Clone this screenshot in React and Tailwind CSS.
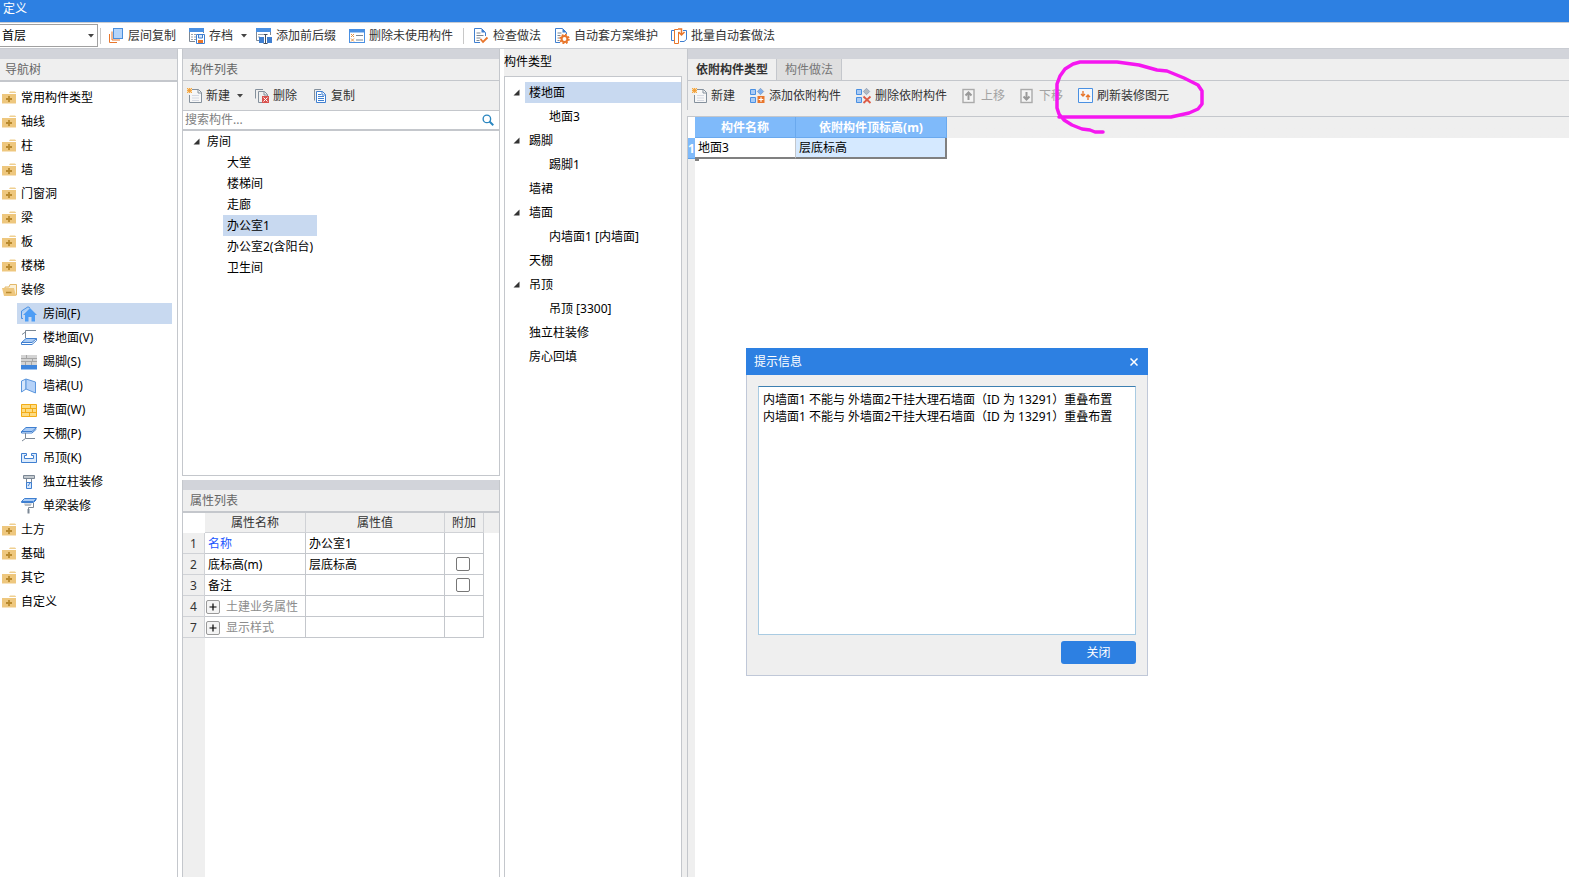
// App.jsx
// Ventana "定义": árbol de navegación, lista de componentes, propiedades y
// tipos dependientes, con el aviso de superposición encima.

import React, { useState } from 'react';

// ─── Iconos ───
const Svg = ({ children, size = 'w-4 h-4' }) => (
  <svg viewBox="0 0 16 16" className={`${size} shrink-0`} fill="none" aria-hidden="true">
    {children}
  </svg>
);

const CaretIcon = () => (
  <svg viewBox="0 0 6 4" className="w-[6px] h-1 ml-1 -mr-1 shrink-0" aria-hidden="true">
    <path d="M0 0h6L3 3.5z" fill="#444" />
  </svg>
);

const ExpandedIcon = () => (
  <svg viewBox="0 0 7 7" className="w-[7px] h-[7px] shrink-0" aria-hidden="true">
    <path d="M6.5 0.5v6h-6z" fill="#333" />
  </svg>
);

const CopyFloorIcon = () => (
  <Svg>
    <path d="M1.5 6v8.5H9" stroke="#e8762c" />
    <path d="M4 3.5v8.5h8" stroke="#e8762c" />
    <rect x="5.5" y=".5" width="9" height="10" fill="#b5d5fb" stroke="#4a8fdc" />
  </Svg>
);

const ArchiveIcon = () => (
  <Svg>
    <path d="M6 13.500H.5V.5h14V5" stroke="#7b8794" />
    <path d="M0 0h15v4H0z" fill="#4a90e2" />
    <path d="M2 6.500h2m1 0h2M2 9h2m1 0h2M2 11.500h2m1 0h2" stroke="#9aa3ad" />
    <path d="M7.500 6.500h8v9h-8z" fill="#fff" stroke="#3f7fd0" />
    <path d="M9.500 7v3h4V7" stroke="#3f7fd0" fill="#dbe9fa" />
    <path d="M9 12h5v3H9z" fill="#e8762c" />
  </Svg>
);

const AffixIcon = () => (
  <Svg>
    <path d="M3 12.500H.5V.5h14V7" stroke="#7b8794" />
    <path d="M0 0h15v4H0z" fill="#4a90e2" />
    <path d="M2 6.500h5M2 9h2" stroke="#9aa3ad" />
    <path d="M3 9h5v6H3zM11 9h5v6h-5z" fill="#3f7fd0" />
    <path d="M7.500 6.500h4M9.500 6.500v9M7.500 15.500h4" stroke="#444f5c" />
  </Svg>
);

const UnusedIcon = () => (
  <Svg>
    <rect x=".5" y="1.500" width="15" height="13" fill="#fff" stroke="#4a90e2" />
    <path d="M0 1h16v3.500H0z" fill="#4a90e2" />
    <path d="M2 6l3 3m0-3L2 9M2 10.500l3 3m0-3l-3 3" stroke="#e8903c" />
    <path d="M7 7.500h7M7 12h7" stroke="#7b8794" />
  </Svg>
);

const CheckDocIcon = () => (
  <Svg>
    <path d="M7 14.500H1.500V.5h7l4 4V8" stroke="#3f7fd0" />
    <path d="M8.500.5v4h4z" fill="#3f7fd0" />
    <path d="M3.500 5h4m-4 2.500h7m-7 2.500h4m-4 2.500h3" stroke="#7b8794" />
    <path d="M7.500 11l2.500 3 4.500-4.500" stroke="#e8762c" strokeWidth="1.800" />
  </Svg>
);

const GearDocIcon = () => (
  <Svg>
    <path d="M6 14.500H1.500V.5h7l4 4V6" stroke="#3f7fd0" />
    <path d="M8.500.5v4h4z" fill="#3f7fd0" />
    <path d="M3.500 5h4m-4 2.500h3m-3 2.500h2m-2 2.500h2" stroke="#7b8794" />
    <circle cx="10.500" cy="11" r="4.400" stroke="#e8762c" strokeWidth="1.600" strokeDasharray="1.800 1.650" />
    <circle cx="10.500" cy="11" r="2.900" stroke="#e8762c" strokeWidth="2" />
  </Svg>
);

const BatchIcon = () => (
  <Svg>
    <path d="M3 2.500H.5v10H3M12 2.500h3.500v9L13 13.500H9" stroke="#3f7fd0" />
    <path d="M7 1.500H3.500v14H7.500V4" stroke="#e8762c" fill="#fff" />
    <path d="M7 1h3.500V6M7.500 4l3 3 3-3" stroke="#e8762c" strokeWidth="1.500" />
  </Svg>
);

const NewIcon = () => (
  <Svg>
    <path d="M5 1.500h6.500l3 3v10h-12V7" stroke="#84909c" fill="#f7f7f7" />
    <path d="M11 1.500v3.500h3.500" stroke="#84909c" />
    <path d="M5 7.500h7m-7 2.500h7m-7 2.500h7" stroke="#d5d9e2" />
    <path d="M0 0h5v5H0z" fill="#fbdca8" />
    <path d="M0 0l5 5M5 0L0 5M2.500 0v5M0 2.500h5" stroke="#f0982e" strokeWidth=".8" />
  </Svg>
);

const DeleteIcon = () => (
  <Svg>
    <path d="M1.500 10.500v-9H9" stroke="#84909c" />
    <path d="M8 14.500H4.500v-11h6l3 3V9" stroke="#84909c" />
    <path d="M10 3.500V7h3.500" stroke="#84909c" />
    <path d="M8 8h7v7H8z" fill="#d9534f" />
    <path d="M9.500 9.500l4 4m0-4l-4 4" stroke="#fff" />
  </Svg>
);

const CopyIcon = () => (
  <Svg>
    <path d="M2.500 12.500V1.500H9" stroke="#84909c" />
    <path d="M4.500 3.500h6l3 3v8h-9z" fill="#fff" stroke="#3f7fd0" />
    <path d="M10 3.500V7h3.500" stroke="#3f7fd0" />
    <path d="M6 6.500h3M6 8.500h6m-6 2h6m-6 2h6" stroke="#3f7fd0" />
  </Svg>
);

const TilesIcon = ({ children, diamond = '#7fb0ee' }) => (
  <Svg>
    <path d="M.5 1.500h5v5h-5zM.5 9.500h5v5h-5z" fill="#a9cbf5" stroke="#4a90e2" />
    <path d="M10.500.3l3.200 3.200-3.200 3.200-3.200-3.200z" fill={diamond} stroke="#7591b3" strokeWidth=".6" />
    {children}
  </Svg>
);

const AddAttachIcon = () => (
  <TilesIcon>
    <path d="M7.500 8h7v7h-7z" fill="#e8762c" />
    <path d="M11 9.200v4.600M8.700 11.500h4.600" stroke="#fff" strokeWidth="1.200" />
  </TilesIcon>
);

const RemoveAttachIcon = () => (
  <TilesIcon diamond="#b4bac1">
    <path d="M7.500 8.500l7 6.500m0-6.500l-7 6.500" stroke="#dd5a45" strokeWidth="1.800" />
  </TilesIcon>
);

const MoveUpIcon = () => (
  <Svg>
    <rect x="1" y="1.500" width="11" height="13" fill="#f4f4f4" stroke="#aaa" strokeWidth="1.400" />
    <path d="M6.500 12V5M3.500 7.500l3-3 3 3" stroke="#999" strokeWidth="2" />
  </Svg>
);

const MoveDownIcon = () => (
  <Svg>
    <rect x="1" y="1.500" width="11" height="13" fill="#f4f4f4" stroke="#aaa" strokeWidth="1.400" />
    <path d="M6.500 4v7M3.500 8.500l3 3 3-3" stroke="#999" strokeWidth="2" />
  </Svg>
);

const RefreshIcon = () => (
  <Svg>
    <path d="M.5 .5h14v14H.5z" fill="#f4f8fd" stroke="#4a90e2" />
    <path d="M5 3v5M3 6l2 2 2-2M10 12V7M8 9l2-2 2 2" stroke="#e8762c" strokeWidth="1.300" />
  </Svg>
);

const SearchIcon = () => (
  <Svg size="w-3 h-3">
    <circle cx="6.500" cy="6.500" r="5" stroke="#2a86c0" strokeWidth="1.800" />
    <path d="M10 10l5 5" stroke="#2a86c0" strokeWidth="2.600" />
  </Svg>
);

const FolderIcon = () => (
  <Svg>
    <path d="M8 1.500h5l1 1V3H7z" fill="#efcf90" />
    <path d="M0 4h14v9.500H0z" fill="#eec77e" />
    <path d="M7 6v6M4 9h6" stroke="#b98a2f" strokeWidth="1.800" />
  </Svg>
);

const FolderOpenIcon = () => (
  <Svg>
    <path d="M8 2.500h6.500V13H3V5h4z" fill="#fbf0d6" stroke="#e3b869" />
    <path d="M0 6h12l2 8H2z" fill="#eec77e" />
    <path d="M4 10.500h5.500" stroke="#b98a2f" strokeWidth="1.500" />
  </Svg>
);

const RoomIcon = () => (
  <Svg>
    <path d="M.5 8V5L7 .8l2 1.200M.5 8v4.500H2" stroke="#4a90e2" fill="#a9cff9" />
    <path d="M9 2l7 7h-2v6.500h-3.500V11h-3v4.500H4V9H2z" fill="#4d9df5" />
  </Svg>
);

const FloorIcon = () => (
  <Svg>
    <path d="M15 .5H4.500V8M4.500 2L1 4.500" stroke="#7b8794" />
    <path d="M5 8.500h10.500l-4.500 4H.5z" fill="#a9cbf5" stroke="#3f7fd0" />
    <path d="M.5 12.500v2H11l4.500-4v-2" stroke="#3f7fd0" />
  </Svg>
);

const SkirtingIcon = () => (
  <Svg>
    <path d="M0 1h16v10H0z" fill="#d4d4d4" />
    <path d="M0 4.500h16M0 7.500h16M5.500 1v3.500M11.500 4.500v3M4.500 7.500V11M10.500 7.500V11" stroke="#a5a5a5" />
    <path d="M0 11h16v4.500H0z" fill="#3f86dd" />
  </Svg>
);

const DadoIcon = () => (
  <Svg>
    <path d="M.5 3L5 1v10L.5 14z" fill="#d7e7fb" stroke="#5b96dd" />
    <path d="M5 1l9.500 3v11L5 11z" fill="#b5d2f8" stroke="#5b96dd" />
  </Svg>
);

const WallIcon = () => (
  <Svg>
    <path d="M.5 2.500h15v12H.5z" fill="#fddc83" stroke="#f3ac17" />
    <path d="M0 6.500h16M0 10.500h16M9.500 2v4M4.500 6.500v4M11.500 6.500v4M8.500 10.500v4" stroke="#f3ac17" />
  </Svg>
);

const CanopyIcon = () => (
  <Svg>
    <path d="M5 1.500h10.500l-4.500 4H.5z" fill="#a9cbf5" stroke="#3f7fd0" />
    <path d="M.5 5.500v1.500H11l4.500-4" stroke="#3f7fd0" />
    <path d="M4.500 7v5.500L1 15m3.500-2.500H14" stroke="#7b8794" />
  </Svg>
);

const CeilingIcon = () => (
  <Svg>
    <path d="M.5 3.500h5v2h-2v3h9v-3h-2v-2h5v9H.5z" fill="#dcebfc" stroke="#3f7fd0" />
  </Svg>
);

const ColumnIcon = () => (
  <Svg>
    <path d="M2.500 1.500h11v3h-11z" fill="#c4cacf" stroke="#7b8794" />
    <path d="M5.500 5v4M10.500 5v4" stroke="#7b8794" />
    <path d="M5.500 8.500v6h5v-6z" fill="#d7e7fb" stroke="#3f7fd0" />
    <path d="M7 12l2-3" stroke="#3f7fd0" />
  </Svg>
);

const BeamIcon = () => (
  <Svg>
    <path d="M3.500.5h12l-3 3H.5z" fill="#a9cbf5" stroke="#3f7fd0" />
    <path d="M.5 3.500v1h12l3-3" stroke="#3f7fd0" />
    <path d="M3 5.500h8l-1.500 2.500H4z" fill="#b9bfc6" />
    <path d="M12.500 5v4.500H7.500V11" stroke="#7b8794" />
    <path d="M7.500 11v4.500" stroke="#7b8794" strokeWidth="2" />
  </Svg>
);

// ─── Datos ───
const NAV_TREE = [
  { label: '常用构件类型' },
  { label: '轴线' },
  { label: '柱' },
  { label: '墙' },
  { label: '门窗洞' },
  { label: '梁' },
  { label: '板' },
  { label: '楼梯' },
  {
    label: '装修',
    children: [
      { label: '房间(F)', Icon: RoomIcon },
      { label: '楼地面(V)', Icon: FloorIcon },
      { label: '踢脚(S)', Icon: SkirtingIcon },
      { label: '墙裙(U)', Icon: DadoIcon },
      { label: '墙面(W)', Icon: WallIcon },
      { label: '天棚(P)', Icon: CanopyIcon },
      { label: '吊顶(K)', Icon: CeilingIcon },
      { label: '独立柱装修', Icon: ColumnIcon },
      { label: '单梁装修', Icon: BeamIcon },
    ],
  },
  { label: '土方' },
  { label: '基础' },
  { label: '其它' },
  { label: '自定义' },
];

const ROOMS = ['大堂', '楼梯间', '走廊', '办公室1', '办公室2(含阳台)', '卫生间'];

const TYPE_TREE = [
  { label: '楼地面', children: ['地面3'] },
  { label: '踢脚', children: ['踢脚1'] },
  { label: '墙裙' },
  { label: '墙面', children: ['内墙面1 [内墙面]'] },
  { label: '天棚' },
  { label: '吊顶', children: ['吊顶 [3300]'] },
  { label: '独立柱装修' },
  { label: '房心回填' },
];

const PROPERTIES = [
  { no: 1, name: '名称', value: '办公室1', link: true },
  { no: 2, name: '底标高(m)', value: '层底标高', check: true },
  { no: 3, name: '备注', value: '', check: true },
  { no: 4, name: '土建业务属性', value: '', group: true },
  { no: 7, name: '显示样式', value: '', group: true },
];

const MESSAGE = [
  '内墙面1 不能与 外墙面2干挂大理石墙面（ID 为 13291）重叠布置',
  '内墙面1 不能与 外墙面2干挂大理石墙面（ID 为 13291）重叠布置',
].join('\n');

// ─── Piezas comunes ───
const ToolButton = ({ icon, children, caret, disabled }) => (
  <button
    type="button"
    disabled={disabled}
    className="flex items-center gap-[3px] whitespace-nowrap text-[#333] disabled:text-[#a3a3a3]"
  >
    {icon}
    {children}
    {caret && <CaretIcon />}
  </button>
);

const MenuButton = ({ icon, children, caret }) => (
  <button type="button" className="flex items-center gap-1 px-1.5 h-5 whitespace-nowrap text-[#333]">
    {icon}
    {children}
    {caret && <CaretIcon />}
  </button>
);

const Divider = () => <span className="w-px h-4 bg-[#c8c8c8]" />;

const Grip = () => <div className="h-[10px] bg-[#d2d4da]" />;

// ─── Barra superior ───
const MenuBar = () => (
  <div className="flex items-center h-[27px] bg-white border-y border-[#c9ccd2]">
    <div className="relative w-[98px] h-[23px] shrink-0">
      <select
        aria-label="楼层"
        className="appearance-none w-full h-full pl-[2px] bg-white border border-l-0 border-[#a0a0a0] text-black"
      >
        <option>首层</option>
      </select>
      <svg viewBox="0 0 6 4" className="absolute right-1 top-[10px] w-[6px] h-1 pointer-events-none" aria-hidden="true">
        <path d="M0 0h6L3 3.500z" fill="#444" />
      </svg>
    </div>
    <div className="flex items-center gap-px pl-[2px]">
      <Divider />
      <MenuButton icon={<CopyFloorIcon />}>层间复制</MenuButton>
      <MenuButton icon={<ArchiveIcon />} caret>存档</MenuButton>
      <MenuButton icon={<AffixIcon />}>添加前后缀</MenuButton>
      <MenuButton icon={<UnusedIcon />}>删除未使用构件</MenuButton>
    </div>
    <div className="flex items-center gap-px pl-1">
      <Divider />
      <span className="w-px" />
      <MenuButton icon={<CheckDocIcon />}>检查做法</MenuButton>
      <MenuButton icon={<GearDocIcon />}>自动套方案维护</MenuButton>
      <MenuButton icon={<BatchIcon />}>批量自动套做法</MenuButton>
    </div>
  </div>
);

// ─── Árbol de navegación ───
const NavTree = () => {
  const [selected, setSelected] = useState('房间(F)');

  return (
    <nav className="w-[178px] shrink-0 bg-white border-r border-[#c4c7cc]">
      <Grip />
      <h2 className="h-[23px] pl-[5px] leading-[21px] bg-[#efefef] border-b-2 border-[#c4c7cc] text-[#666]">导航树</h2>
      <ul className="pt-1">
        {NAV_TREE.map(({ label, children }) => (
          <li key={label}>
            <button type="button" className="flex items-center gap-[3px] h-6 pl-[2px]">
              {children ? <FolderOpenIcon /> : <FolderIcon />}
              {label}
            </button>
            {children && (
              <ul className="pl-[17px] pr-[5px]">
                {children.map(({ label: child, Icon }) => (
                  <li key={child} className="h-6 pt-px">
                    <button
                      type="button"
                      onClick={() => setSelected(child)}
                      className={`flex items-center gap-[6px] w-full h-[21px] pl-1 ${selected === child ? 'bg-[#c8d9f0]' : ''}`}
                    >
                      <Icon />
                      {child}
                    </button>
                  </li>
                ))}
              </ul>
            )}
          </li>
        ))}
      </ul>
    </nav>
  );
};

// ─── Lista de componentes ───
const ComponentList = () => {
  const [room, setRoom] = useState('办公室1');

  return (
    <section className="border border-t-0 border-[#c4c7cc] bg-white">
      <Grip />
      <h2 className="h-[22px] pl-[7px] leading-[21px] bg-[#efefef] border-b border-[#c4c7cc] text-[#666]">构件列表</h2>
      <div className="flex items-center gap-[15px] h-[30px] pl-1 bg-[#efefef] border-b border-[#c4c7cc]">
        <ToolButton icon={<NewIcon />} caret>新建</ToolButton>
        <ToolButton icon={<DeleteIcon />}>删除</ToolButton>
        <ToolButton icon={<CopyIcon />}>复制</ToolButton>
      </div>
      <div className="flex items-center h-5 pr-[5px] border-b-2 border-[#c4c7cc]">
        <input
          type="text"
          aria-label="搜索构件"
          placeholder="搜索构件..."
          className="flex-1 h-[18px] pl-[2px] outline-none placeholder:text-[#808080]"
        />
        <button type="button" aria-label="搜索">
          <SearchIcon />
        </button>
      </div>
      <div className="h-[344px] overflow-hidden">
        <div className="flex items-center gap-[7px] h-[21px] pl-[10px]">
          <ExpandedIcon />
          房间
        </div>
        <ul className="flex flex-col items-start pl-10">
          {ROOMS.map((name) => (
            <li key={name}>
              <button
                type="button"
                onClick={() => setRoom(name)}
                className={`h-[21px] min-w-[94px] pl-1 text-left ${room === name ? 'bg-[#c8d9f0]' : ''}`}
              >
                {name}
              </button>
            </li>
          ))}
        </ul>
      </div>
    </section>
  );
};

// ─── Propiedades ───
const PropertyList = () => (
  <section className="flex flex-col flex-1 mt-1 border-x border-[#c4c7cc] bg-white">
    <Grip />
    <h2 className="h-[23px] pl-[7px] leading-[21px] bg-[#efefef] border-b-2 border-[#c4c7cc] text-[#666]">属性列表</h2>
    <table className="w-full table-fixed border-separate border-spacing-0">
      <colgroup>
        <col className="w-[22px]" />
        <col className="w-[101px]" />
        <col className="w-[139px]" />
        <col className="w-[39px]" />
        <col />
      </colgroup>
      <thead>
        <tr className="h-5 bg-[#efefef] text-[#333]">
          <th className="p-0 bg-white" />
          <th className="p-0 pt-px font-normal border-r border-b border-[#d0d2d6]">属性名称</th>
          <th className="p-0 pt-px font-normal border-r border-b border-[#d0d2d6]">属性值</th>
          <th className="p-0 pt-px font-normal border-r border-b border-[#d0d2d6]">附加</th>
          <th className="p-0" />
        </tr>
      </thead>
      <tbody>
        {PROPERTIES.map(({ no, name, value, link, check, group }) => (
          <tr key={no} className="h-[21px]">
            <td className="p-0 pt-[2px] text-center bg-[#efefef] border-r border-b border-[#d0d2d6] text-[#333]">{no}</td>
            <td className="p-0 pt-[2px] border-r border-b border-[#c4c7cc]">
              {group ? (
                <span className="flex items-center gap-[6px] pl-px text-[#8c8c8c]">
                  <button
                    type="button"
                    aria-label={`展开${name}`}
                    className="flex items-center justify-center w-[14px] h-[14px] border border-[#999] rounded-[2px] bg-[#f4f4f4]"
                  >
                    <svg viewBox="0 0 8 8" className="w-2 h-2" aria-hidden="true">
                      <path d="M4 .5v7M.5 4h7" stroke="#000" strokeWidth="1.200" />
                    </svg>
                  </button>
                  {name}
                </span>
              ) : (
                <span className={`block pl-[3px] ${link ? 'text-[#1a56ff]' : ''}`}>{name}</span>
              )}
            </td>
            <td className="p-0 pt-[2px] pl-[3px] border-r border-b border-[#c4c7cc]">{value}</td>
            <td className="p-0 pl-[11px] border-r border-b border-[#c4c7cc]">
              {check && (
                <input
                  type="checkbox"
                  aria-label={`${name} 附加`}
                  className="block appearance-none w-[14px] h-[14px] border border-[#777] rounded-[2px] bg-white"
                />
              )}
            </td>
            <td className="p-0" />
          </tr>
        ))}
      </tbody>
    </table>
    <div className="flex-1 w-[22px] bg-[#efefef]" />
  </section>
);

// ─── Tipos de componente ───
const TypeTree = () => (
  <section className="flex flex-col w-[183px] ml-1 pr-[5px] shrink-0 bg-[#efefef]">
    <h2 className="h-[27px] leading-[25px]">构件类型</h2>
    <ul className="flex-1 pt-1 bg-white border border-b-0 border-[#c4c7cc]">
      {TYPE_TREE.map(({ label, children }, i) => (
        <li key={label}>
          <div className="h-6 pt-px pl-2">
            <div className="flex items-center h-[21px]">
              <span className="w-3">{children && <ExpandedIcon />}</span>
              <span className={`flex-1 pl-1 leading-[21px] ${i === 0 ? 'bg-[#c8d9f0]' : ''}`}>{label}</span>
            </div>
          </div>
          {children && (
            <ul>
              {children.map((child) => (
                <li key={child} className="h-6 pl-11 leading-6">{child}</li>
              ))}
            </ul>
          )}
        </li>
      ))}
    </ul>
  </section>
);

// ─── Tipos dependientes ───
const AttachedPanel = () => (
  <section className="flex flex-col flex-1 min-w-0 bg-[#efefef]">
    <div className="border-l border-[#c4c7cc]">
      <Grip />
      <div className="flex h-[22px] border-b border-[#c4c7cc]" role="tablist">
        <button type="button" role="tab" aria-selected="true" className="px-2 border-r border-[#c4c7cc] font-bold text-[#333]">
          依附构件类型
        </button>
        <button type="button" role="tab" aria-selected="false" className="px-2 bg-[#dfdfdf] border-r border-[#c4c7cc] text-[#777]">
          构件做法
        </button>
      </div>
      <div className="flex items-center gap-[15px] h-[29px] pl-1">
        <ToolButton icon={<NewIcon />}>新建</ToolButton>
        <ToolButton icon={<AddAttachIcon />}>添加依附构件</ToolButton>
        <ToolButton icon={<RemoveAttachIcon />}>删除依附构件</ToolButton>
        <ToolButton icon={<MoveUpIcon />} disabled>上移</ToolButton>
        <ToolButton icon={<MoveDownIcon />} disabled>下移</ToolButton>
        <ToolButton icon={<RefreshIcon />}>刷新装修图元</ToolButton>
      </div>
    </div>
    <div className="flex flex-col flex-1 mt-[6px] border-l border-t border-[#c4c7cc] bg-white">
      <div className="bg-linear-to-b from-[#efefef] from-[21px] to-white to-[21px]">
        <table className="w-[259px] table-fixed border-separate border-spacing-0">
          <colgroup>
            <col className="w-[7px]" />
            <col className="w-[101px]" />
            <col className="w-[151px]" />
          </colgroup>
          <thead>
            <tr className="h-[21px] text-white">
              <th className="p-0 bg-white" />
              <th className="p-0 pt-[2px] bg-[#7fbafa] border-r border-b border-[#6aa9ee]">构件名称</th>
              <th className="p-0 pt-[2px] bg-[#7fbafa] border-r border-b border-[#6aa9ee]">依附构件顶标高(m)</th>
            </tr>
          </thead>
          <tbody>
            <tr className="h-[21px]">
              <td className="p-0 pt-[2px] overflow-hidden bg-[#7fbafa] border-b border-[#5b9fe8] font-bold text-white">1</td>
              <td className="relative p-0 pt-px pl-[3px] bg-white border-r border-r-[#c4c7cc] border-b-2 border-b-[#808080]">
                地面3
                <span className="absolute left-0 -bottom-1 w-1 h-1 bg-[#808080]" />
              </td>
              <td className="p-0 pt-px pl-[3px] bg-[#d5e9ff] border-r-2 border-b-2 border-[#808080]">层底标高</td>
            </tr>
          </tbody>
        </table>
      </div>
      <div className="flex-1 w-[7px] bg-[#efefef]" />
    </div>
  </section>
);

// ─── Trazo a mano alzada alrededor de "刷新装修图元" ───
const MarkerStroke = () => (
  <svg
    viewBox="0 0 156 78"
    className="absolute left-[1053px] top-[58px] w-[156px] h-[78px] pointer-events-none"
    fill="none"
    aria-hidden="true"
  >
    <path
      d="M50 74h-8l-5-2-8-1-10-4-8-5-5-6-2-6V26l3-8 5-7 8-5 7-2h37l22 3 18 5 10 1 17 7 14 7 4 6v13l-4 5-9 4-18 4H6"
      stroke="#f516f0"
      strokeWidth="3.500"
      strokeLinejoin="round"
      strokeLinecap="round"
    />
  </svg>
);

// ─── Aviso ───
const MessageDialog = ({ onClose }) => (
  <div
    role="dialog"
    aria-labelledby="message-title"
    className="absolute left-[746px] top-[348px] w-[402px] bg-[#efefef] border border-t-0 border-[#c0c8d8]"
  >
    <div className="flex items-center justify-between h-[27px] -mx-px pl-2 pr-[10px] bg-[#2d80e2] text-white">
      <h2 id="message-title">提示信息</h2>
      <button type="button" onClick={onClose} aria-label="关闭窗口">
        <svg viewBox="0 0 8 8" className="w-2 h-2" aria-hidden="true">
          <path d="M.5.5l7 7m0-7l-7 7" stroke="#fff" strokeWidth="1.500" />
        </svg>
      </button>
    </div>
    <div className="flex flex-col items-end gap-[6px] p-[11px]">
      <textarea
        readOnly
        aria-label="提示内容"
        value={MESSAGE}
        className="block w-full h-[249px] p-1 leading-[17px] resize-none outline-none bg-white border border-[#a9cbe2] border-t-[#3c7fb1] text-black"
      />
      <button type="button" onClick={onClose} className="w-[75px] h-[23px] pt-px rounded-[3px] bg-[#2d80e2] text-white">
        关闭
      </button>
    </div>
  </div>
);

const App = () => {
  const [showMessage, setShowMessage] = useState(true);

  return (
    <div className="relative flex flex-col min-h-screen overflow-hidden bg-white text-black text-[12px] leading-[18px] font-['Noto_Sans','Noto_Sans_CJK_SC',sans-serif]">
      <h1 className="h-[22px] pl-[3px] bg-[#2d80e2] text-white">定义</h1>
      <MenuBar />
      <main className="flex flex-1">
        <NavTree />
        <div className="flex flex-col w-[318px] ml-1 shrink-0">
          <ComponentList />
          <PropertyList />
        </div>
        <TypeTree />
        <AttachedPanel />
      </main>
      <MarkerStroke />
      {showMessage && <MessageDialog onClose={() => setShowMessage(false)} />}
    </div>
  );
};

export default App;
